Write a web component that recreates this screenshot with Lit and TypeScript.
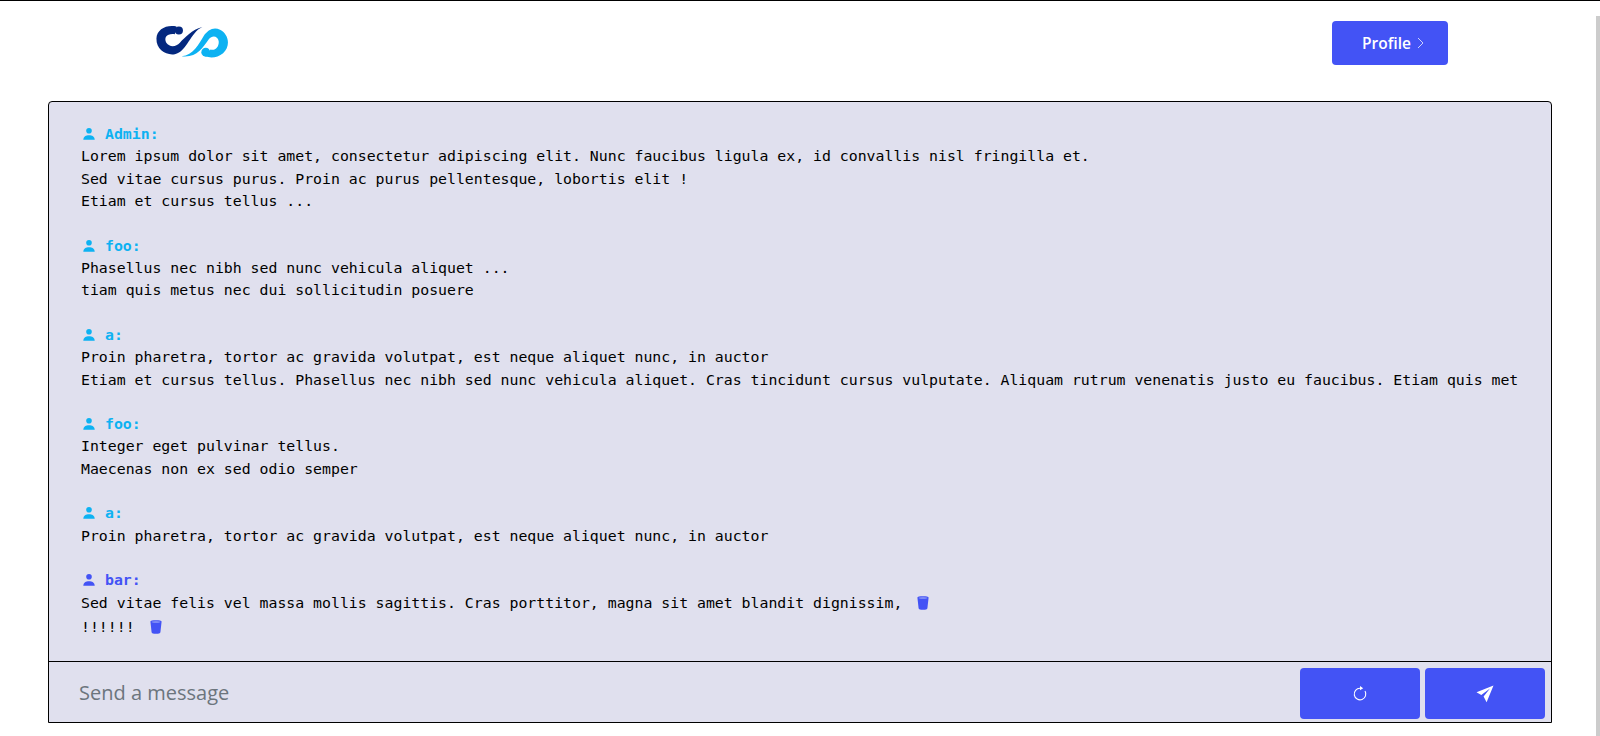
import { LitElement, html, css, svg } from 'lit'
import { customElement } from 'lit/decorators.js'

const ADMIN = 'admin'
const SELF = 'self'

const messages = [
    { user: 'Admin', kind: ADMIN, lines: ['Lorem ipsum dolor sit amet, consectetur adipiscing elit. Nunc faucibus ligula ex, id convallis nisl fringilla et.', 'Sed vitae cursus purus. Proin ac purus pellentesque, lobortis elit !', 'Etiam et cursus tellus ...'] },
    { user: 'foo', kind: ADMIN, lines: ['Phasellus nec nibh sed nunc vehicula aliquet ...', 'tiam quis metus nec dui sollicitudin posuere'] },
    { user: 'a', kind: ADMIN, lines: ['Proin pharetra, tortor ac gravida volutpat, est neque aliquet nunc, in auctor', 'Etiam et cursus tellus. Phasellus nec nibh sed nunc vehicula aliquet. Cras tincidunt cursus vulputate. Aliquam rutrum venenatis justo eu faucibus. Etiam quis met'] },
    { user: 'foo', kind: ADMIN, lines: ['Integer eget pulvinar tellus.', 'Maecenas non ex sed odio semper'] },
    { user: 'a', kind: ADMIN, lines: ['Proin pharetra, tortor ac gravida volutpat, est neque aliquet nunc, in auctor'] },
    { user: 'bar', kind: SELF, lines: ['Sed vitae felis vel massa mollis sagittis. Cras porttitor, magna sit amet blandit dignissim,', '!!!!!!'] }
]

const personIcon = svg`<svg class="person" viewBox="0 0 16 16" fill="currentColor"><circle cx="8" cy="4.2" r="3.2"/><path d="M1.5 14.5c0-3.6 3-5.2 6.5-5.2s6.5 1.6 6.5 5.2z"/></svg>`
const trashIcon = svg`<svg class="trash" viewBox="0 0 12 14" fill="currentColor"><path d="M.4 1.6C.4.7 2.8.2 6 .2s5.6.5 5.6 1.4l-1.2 10.6c-.1 1-2 1.6-4.4 1.6s-4.3-.6-4.4-1.6z"/><ellipse cx="6" cy="2" rx="4.4" ry=".8" fill="#8f9bf7"/></svg>`

@customElement('app-root')
export class AppRoot extends LitElement {
    static styles = css`
        :host {
            display: block;
            height: 736px;
            box-sizing: border-box;
            border-top: 1px solid #000;
            background: #fff;
            overflow: hidden;
            position: relative;
        }

        .track {
            position: absolute;
            top: 15px;
            right: 0;
            bottom: 0;
            width: 4px;
            background: #ccc;
        }

        .top {
            display: flex;
            justify-content: space-between;
            align-items: flex-start;
            height: 100px;
            box-sizing: border-box;
            padding: 20px 152px 0 156px;
        }

        .logo {
            width: 75px;
            height: 34px;
            margin-top: 3px;
        }

        .profile {
            display: flex;
            align-items: center;
            justify-content: center;
            gap: 6px;
            width: 116px;
            height: 44px;
            padding: 0 0 0 6px;
            background: #4353f5;
            color: #fff;
            border: 0;
            border-radius: 4px;
            font: 600 15.5px 'Open Sans', sans-serif;
        }

        .profile svg {
            width: 7px;
            height: 12px;
        }

        .chat {
            margin-left: 48px;
            width: 1504px;
            height: 622px;
            box-sizing: border-box;
            border: 1px solid #000;
            border-radius: 4px 4px 0 0;
            background: #e0e0ee;
            display: flex;
            flex-direction: column;
        }

        .log {
            flex: 1;
            min-height: 0;
            overflow: hidden;
            padding: 21px 32px 0 32px;
            font: 14.83px/22.4px 'DejaVu Sans Mono', monospace;
            color: #000;
        }

        .msg {
            margin-bottom: 22px;
        }

        .line {
            white-space: nowrap;
        }

        .line.with-icon {
            padding-bottom: 2px;
        }

        .name {
            display: flex;
            align-items: center;
            gap: 9px;
            font-weight: 700;
            color: #0db2f2;
        }

        .name.self {
            color: #4353f5;
        }

        .person {
            width: 14px;
            height: 14px;
            margin-left: 1px;
        }

        .trash {
            width: 12px;
            height: 14px;
            color: #4353f5;
            margin-left: 15px;
            vertical-align: -2px;
        }

        .send {
            flex: none;
            height: 61px;
            box-sizing: border-box;
            border-top: 1px solid #000;
            display: flex;
            align-items: center;
            gap: 5px;
            padding: 3px 6px 0 30px;
        }

        .send input {
            flex: 1;
            min-width: 0;
            padding: 0;
            margin-top: -3px;
            border: 0;
            outline: 0;
            background: transparent;
            font: 20px 'Open Sans', sans-serif;
            color: #333;
        }

        .send input::placeholder {
            color: #6c757d;
            opacity: 1;
        }

        .btn {
            width: 120px;
            height: 51px;
            display: flex;
            align-items: center;
            justify-content: center;
            background: #4353f5;
            border: 0;
            border-radius: 4px;
            color: #fff;
        }

        .btn svg {
            width: 16px;
            height: 16px;
        }

        .btn svg.plane {
            width: 18px;
            height: 18px;
        }
    `

    render() {
        return html`
            <div class="track"></div>
            <div class="top">
                <svg class="logo" viewBox="80 75 220 100">
                    <g fill="#04287f">
                        <path d="M140 82C110 76 82 90 81 118C80 152 110 168 135 164C172 156 180 100 216 84C185 92 165 115 150 130C138 143 120 144 110 130C102 114 112 102 135 105Z"/>
                        <circle cx="147" cy="94" r="12"/>
                    </g>
                    <g fill="#0db2f2">
                        <path d="M155 170C190 165 205 135 220 110C232 92 250 82 268 92C294 105 300 140 277 161C262 174 240 176 225 170L240 150C255 155 266 140 264 125C261 110 245 107 235 120C215 147 200 175 155 170Z"/>
                        <circle cx="226" cy="158" r="13"/>
                    </g>
                </svg>
                <button class="profile">Profile
                    <svg viewBox="0 0 7 12" fill="none" stroke="#cdd2fc" stroke-width="1"><path d="M1 1l5 5-5 5"/></svg>
                </button>
            </div>
            <div class="chat">
                <div class="log">
                    ${messages.map(m => html`
                        <div class="msg">
                            <div class="name ${m.kind === SELF ? 'self' : ''}">${personIcon}<span>${m.user}:</span></div>
                            ${m.lines.map(l => html`<div class="line ${m.kind === SELF ? 'with-icon' : ''}">${l}${m.kind === SELF ? trashIcon : ''}</div>`)}
                        </div>
                    `)}
                </div>
                <div class="send">
                    <input placeholder="Send a message" />
                    <button class="btn">
                        <svg viewBox="0 0 16 16" fill="none" stroke="currentColor" stroke-width="1.1"><path d="M8 2.2A5.8 5.8 0 1 0 13 5"/><path d="M8 .1l3.2 2.1-3.2 2.1z" fill="currentColor" stroke="none"/></svg>
                    </button>
                    <button class="btn">
                        <svg class="plane" viewBox="0 0 18 18" fill="currentColor"><path d="M17.5.5L.5 7.2l4.8 2.9L14 3.6 7.6 11.4l3 5.9z"/></svg>
                    </button>
                </div>
            </div>
        `
    }
}
